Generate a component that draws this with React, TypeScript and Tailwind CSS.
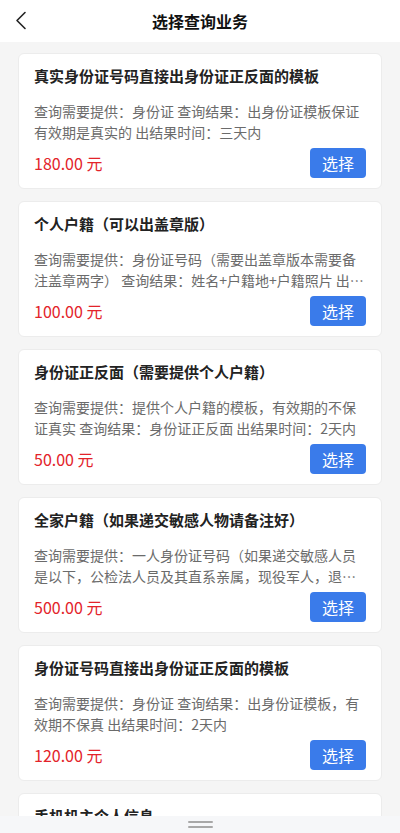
import React from "react";

type Service = {
  title: string;
  desc: string;
  price: string;
};

const services: Service[] = [
  {
    title: "真实身份证号码直接出身份证正反面的模板",
    desc: "查询需要提供：身份证 查询结果：出身份证模板保证有效期是真实的 出结果时间：三天内",
    price: "180.00",
  },
  {
    title: "个人户籍（可以出盖章版）",
    desc: "查询需要提供：身份证号码（需要出盖章版本需要备注盖章两字） 查询结果：姓名+户籍地+户籍照片 出结果时间：三天内",
    price: "100.00",
  },
  {
    title: "身份证正反面（需要提供个人户籍）",
    desc: "查询需要提供：提供个人户籍的模板，有效期的不保证真实 查询结果：身份证正反面 出结果时间：2天内",
    price: "50.00",
  },
  {
    title: "全家户籍（如果递交敏感人物请备注好）",
    desc: "查询需要提供：一人身份证号码（如果递交敏感人员是以下，公检法人员及其直系亲属，现役军人，退役军人等请备注） 查询结果：全家户籍 出结果时间：三天内",
    price: "500.00",
  },
  {
    title: "身份证号码直接出身份证正反面的模板",
    desc: "查询需要提供：身份证 查询结果：出身份证模板，有效期不保真 出结果时间：2天内",
    price: "120.00",
  },
  {
    title: "手机机主个人信息",
    desc: "查询需要提供：手机号码 查询结果：机主姓名+身份证号码 出结果时间：一天内",
    price: "80.00",
  },
];

function ServiceCard({ title, desc, price }: Service) {
  return (
    <div className="rounded-md border border-[#ececec] bg-white px-[15px] pt-[11px] pb-[10px]">
      <h3 className="text-[15px] font-bold leading-[22px] text-[#222]">{title}</h3>
      <p className="mt-[14px] line-clamp-2 h-[42px] text-[14px] leading-[21px] text-[#6b6b6b]">{desc}</p>
      <div className="mt-[5px] flex items-center justify-between">
        <span className="text-[16px] text-[#e3232a]">{price} 元</span>
        <button className="h-[30px] w-[56px] rounded bg-[#3a7bea] text-[16px] text-white">选择</button>
      </div>
    </div>
  );
}

export default function App() {
  return (
    <div
      className="relative h-[833px] overflow-hidden bg-[#f5f5f5]"
      style={{ fontFamily: '"Noto Sans CJK SC", "Noto Sans", sans-serif' }}
    >
      <header className="relative flex h-[42px] items-center justify-center bg-white">
        <button className="absolute left-[13px] top-[9px] p-0.5 text-[#222]">
          <svg width="12" height="19" viewBox="0 0 12 19" fill="none">
            <path d="M10 1.5L2 9.5l8 8" stroke="currentColor" strokeWidth="1.6" strokeLinecap="round" strokeLinejoin="round" />
          </svg>
        </button>
        <h1 className="text-[16px] font-bold text-[#111]">选择查询业务</h1>
      </header>

      <main className="flex flex-col gap-3 px-[18px] pt-[11px]">
        {services.map((s) => (
          <ServiceCard key={s.title} {...s} />
        ))}
      </main>

      <div className="absolute inset-x-0 bottom-0 flex h-[17px] flex-col items-center justify-center gap-[3px] bg-[#f6f7f9]">
        <span className="h-[2px] w-[25px] rounded-full bg-[#a8a8a8]" />
        <span className="h-[2px] w-[25px] rounded-full bg-[#a8a8a8]" />
      </div>
    </div>
  );
}
